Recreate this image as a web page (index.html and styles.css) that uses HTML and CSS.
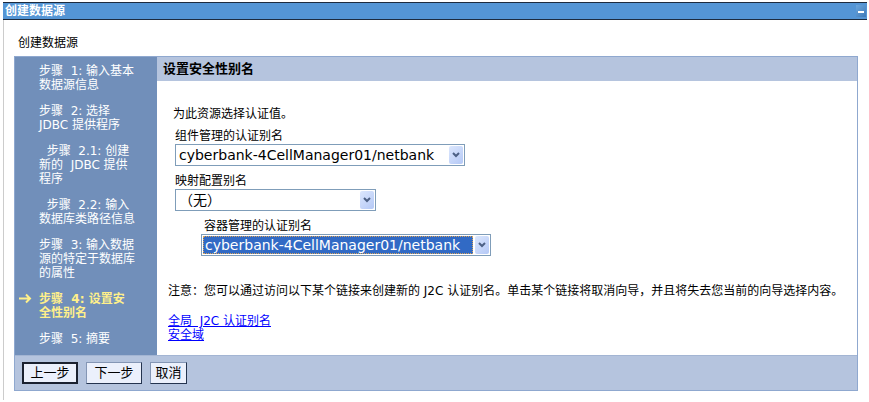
FILE: index.html
```html
<!DOCTYPE html>
<html lang="zh-CN">
<head>
    <meta charset="UTF-8">
    <meta name="viewport" content="width=device-width, initial-scale=1.0">
    <title>创建数据源</title>
    <link rel="stylesheet" href="styles.css">
</head>
<body>
    <div class="portlet">
        <div class="title-bar">
            <h1>创建数据源</h1>
            <button type="button" class="minimize" aria-label="最小化"></button>
        </div>
        <form class="content">
            <h2 class="page-title">创建数据源</h2>
            <div class="wizard">
                <ol class="steps">
                    <li>步骤&nbsp; 1: 输入基本<br>数据源信息</li>
                    <li>步骤&nbsp; 2: 选择<br>JDBC 提供程序</li>
                    <li>&nbsp; 步骤&nbsp; 2.1: 创建<br>新的&nbsp; JDBC 提供<br>程序</li>
                    <li>&nbsp; 步骤&nbsp; 2.2: 输入<br>数据库类路径信息</li>
                    <li>步骤&nbsp; 3: 输入数据<br>源的特定于数据库<br>的属性</li>
                    <li class="current">
                        <svg class="step-arrow" width="13" height="11" viewBox="0 0 13 11">
                            <path d="M0 5.5H11M7 1.5L11 5.5L7 9.5" fill="none" stroke="#fff08a" stroke-width="2"/>
                        </svg>
                        步骤&nbsp; 4: 设置安<br>全性别名
                    </li>
                    <li>步骤&nbsp; 5: 摘要</li>
                </ol>
                <div class="main">
                    <h3>设置安全性别名</h3>
                    <div class="fields">
                        <p>为此资源选择认证值。</p>
                        <div class="field">
                            <label for="component">组件管理的认证别名</label>
                            <div class="combo">
                                <select id="component"><option>cyberbank-4CellManager01/netbank</option></select>
                                <svg class="arrow" width="14" height="18" viewBox="0 0 14 18"><path d="M4 7L7 10L10 7" fill="none" stroke="#4d6185" stroke-width="2"/></svg>
                            </div>
                        </div>
                        <div class="field">
                            <label for="mapping">映射配置别名</label>
                            <div class="combo combo-short">
                                <select id="mapping"><option>（无）</option></select>
                                <svg class="arrow" width="14" height="18" viewBox="0 0 14 18"><path d="M4 7L7 10L10 7" fill="none" stroke="#4d6185" stroke-width="2"/></svg>
                            </div>
                        </div>
                        <div class="field field-indent">
                            <label for="container">容器管理的认证别名</label>
                            <div class="combo combo-active">
                                <select id="container"><option>cyberbank-4CellManager01/netbank</option></select>
                                <svg class="arrow" width="14" height="18" viewBox="0 0 14 18"><path d="M4 7L7 10L10 7" fill="none" stroke="#4d6185" stroke-width="2"/></svg>
                            </div>
                        </div>
                    </div>
                    <div class="note">
                        <p>注意：您可以通过访问以下某个链接来创建新的 J2C 认证别名。单击某个链接将取消向导，并且将失去您当前的向导选择内容。</p>
                        <a href="#">全局&nbsp; J2C 认证别名</a>
                        <a href="#">安全域</a>
                    </div>
                </div>
                <div class="buttons">
                    <button type="button" class="btn btn-default">上一步</button>
                    <button type="button" class="btn">下一步</button>
                    <button type="button" class="btn btn-small">取消</button>
                </div>
            </div>
        </form>
    </div>
</body>
</html>
```
FILE: styles.css
```css
* {
    box-sizing: border-box;
}
body {
    margin: 0;
    padding: 2px 2px 0 3px;
    background: #fff;
    color: #000;
    font-family: "DejaVu Sans", "Noto Sans CJK SC", sans-serif;
    font-size: 12px;
    line-height: 14px;
}
h1, h2, h3, p, ol {
    margin: 0;
    padding: 0;
}
.portlet {
    display: flex;
    flex-direction: column;
    min-height: calc(100vh - 4px);
}
.title-bar {
    display: flex;
    justify-content: space-between;
    align-items: center;
    height: 18px;
    padding-left: 2px;
    background: #5495d5;
    border: 1px solid #1d2b3e;
    border-left: none;
    border-right: none;
}
.title-bar h1 {
    color: #fff;
    font-size: 12px;
    line-height: 16px;
}
.minimize {
    width: 10px;
    height: 12px;
    margin-right: 1px;
    padding: 0;
    border: none;
    background: linear-gradient(#fff, #fff) center 6px / 6px 2px no-repeat, linear-gradient(135deg, #6ba6dd, #3f7ab8);
}
.content {
    flex: 1;
    padding: 16px 9px 0 10px;
    border-left: 1px solid #ccc;
}
.page-title {
    margin-left: 4px;
    font-size: 12px;
    font-weight: normal;
}

/* wizard */
.wizard {
    display: grid;
    grid-template-columns: 142px 1fr;
    margin-top: 6px;
    border: 1px solid #8fa8cf;
}
.steps {
    display: flex;
    flex-direction: column;
    gap: 12px;
    padding: 7px 4px 4px 24px;
    background: #718fba;
    color: #fff;
    list-style: none;
    white-space: nowrap;
}
.steps .current {
    position: relative;
    color: #fff08a;
    font-weight: bold;
}
.step-arrow {
    position: absolute;
    left: -20px;
    top: 1px;
}
.main h3 {
    padding: 5px 6px;
    background: #b5c4de;
    font-size: 13px;
    line-height: 14px;
}
.fields {
    padding: 26px 16px 0;
}
.field {
    margin-top: 8px;
    margin-left: 2px;
}
.field label {
    display: block;
    margin-bottom: 1px;
}
.field-indent {
    margin-left: 28px;
}
.field-indent label {
    margin-left: 3px;
}
.combo {
    display: flex;
    align-items: center;
    width: 290px;
    height: 22px;
    padding: 1px;
    border: 1px solid #7f9db9;
    background: #fff;
}
.combo-short {
    width: 201px;
}
.combo select {
    flex: 1;
    min-width: 0;
    height: 18px;
    margin-right: 2px;
    padding: 0 2px;
    appearance: none;
    border: none;
    border-radius: 0;
    background: #fff;
    color: #000;
    font-family: inherit;
    font-size: 14px;
    line-height: 18px;
}
.combo-active select {
    background: #316ac5;
    color: #fff;
    outline: 1px dotted #d9a35a;
    outline-offset: -1px;
}
.arrow {
    flex: none;
    border-radius: 2px;
    background: linear-gradient(135deg, #dce7fd, #b4c8f6);
}
.note {
    display: flex;
    flex-direction: column;
    align-items: flex-start;
    padding: 28px 11px 13px;
}
.note p {
    margin-bottom: 16px;
}
.note a {
    color: #00f;
}
.buttons {
    grid-column: 1 / -1;
    display: flex;
    gap: 8px;
    padding: 6px 7px;
    border-top: 1px solid #a3b5d3;
    background: #b5c4de;
}
.btn {
    width: 56px;
    height: 22px;
    padding: 0;
    border: 1px solid #24344f;
    border-top-color: #8496b5;
    border-left-color: #8496b5;
    background: #ebf0fc;
    color: #000;
    font-family: inherit;
    font-size: 13px;
    line-height: 18px;
}
.btn-default {
    border: 2px solid #1a2130;
}
.btn-small {
    width: 37px;
}
```
